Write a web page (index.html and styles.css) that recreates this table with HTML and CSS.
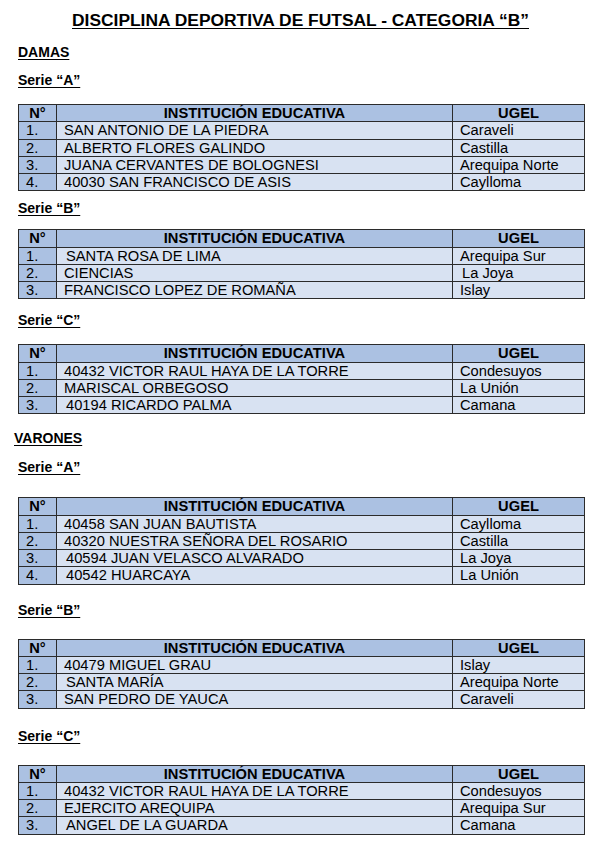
FILE: index.html
```html
<!DOCTYPE html>
<html lang="es">
<head>
<meta charset="utf-8">
<title>Disciplina deportiva de futsal</title>
<link rel="stylesheet" href="styles.css">
</head>
<body>
<div class="page">
  <h1 class="title">DISCIPLINA DEPORTIVA DE FUTSAL - CATEGORIA “B”</h1>

  <h2 class="cat g14">DAMAS</h2>
  <h3 class="serie g12">Serie “A”</h3>
  <table class="tbl g16">
    <tr><th class="n">N°</th><th>INSTITUCIÓN EDUCATIVA</th><th class="u">UGEL</th></tr>
    <tr><td class="n">1.</td><td>SAN ANTONIO DE LA PIEDRA</td><td>Caraveli</td></tr>
    <tr><td class="n">2.</td><td>ALBERTO FLORES GALINDO</td><td>Castilla</td></tr>
    <tr><td class="n">3.</td><td>JUANA CERVANTES DE BOLOGNESI</td><td>Arequipa Norte</td></tr>
    <tr><td class="n">4.</td><td>40030 SAN FRANCISCO DE ASIS</td><td>Caylloma</td></tr>
  </table>

  <h3 class="serie g9">Serie “B”</h3>
  <table class="tbl g13">
    <tr><th class="n">N°</th><th>INSTITUCIÓN EDUCATIVA</th><th class="u">UGEL</th></tr>
    <tr><td class="n">1.</td><td class="ind">SANTA ROSA DE LIMA</td><td>Arequipa Sur</td></tr>
    <tr><td class="n">2.</td><td>CIENCIAS</td><td class="ind">La Joya</td></tr>
    <tr><td class="n">3.</td><td>FRANCISCO LOPEZ DE ROMAÑA</td><td>Islay</td></tr>
  </table>

  <h3 class="serie g13">Serie “C”</h3>
  <table class="tbl g16">
    <tr><th class="n">N°</th><th>INSTITUCIÓN EDUCATIVA</th><th class="u">UGEL</th></tr>
    <tr><td class="n">1.</td><td>40432 VICTOR RAUL HAYA DE LA TORRE</td><td>Condesuyos</td></tr>
    <tr><td class="n">2.</td><td>MARISCAL ORBEGOSO</td><td>La Unión</td></tr>
    <tr><td class="n">3.</td><td class="ind">40194 RICARDO PALMA</td><td>Camana</td></tr>
  </table>

  <h2 class="cat varones g16">VARONES</h2>
  <h3 class="serie g13">Serie “A”</h3>
  <table class="tbl g22">
    <tr><th class="n">N°</th><th>INSTITUCIÓN EDUCATIVA</th><th class="u">UGEL</th></tr>
    <tr><td class="n">1.</td><td>40458 SAN JUAN BAUTISTA</td><td>Caylloma</td></tr>
    <tr><td class="n">2.</td><td>40320 NUESTRA SEÑORA DEL ROSARIO</td><td>Castilla</td></tr>
    <tr><td class="n">3.</td><td class="ind">40594 JUAN VELASCO ALVARADO</td><td>La Joya</td></tr>
    <tr><td class="n">4.</td><td class="ind">40542 HUARCAYA</td><td>La Unión</td></tr>
  </table>

  <h3 class="serie g17">Serie “B”</h3>
  <table class="tbl g21">
    <tr><th class="n">N°</th><th>INSTITUCIÓN EDUCATIVA</th><th class="u">UGEL</th></tr>
    <tr><td class="n">1.</td><td>40479 MIGUEL GRAU</td><td>Islay</td></tr>
    <tr><td class="n">2.</td><td class="ind">SANTA MARÍA</td><td>Arequipa Norte</td></tr>
    <tr><td class="n">3.</td><td>SAN PEDRO DE YAUCA</td><td>Caraveli</td></tr>
  </table>

  <h3 class="serie g19">Serie “C”</h3>
  <table class="tbl g21">
    <tr><th class="n">N°</th><th>INSTITUCIÓN EDUCATIVA</th><th class="u">UGEL</th></tr>
    <tr><td class="n">1.</td><td>40432 VICTOR RAUL HAYA DE LA TORRE</td><td>Condesuyos</td></tr>
    <tr><td class="n">2.</td><td>EJERCITO AREQUIPA</td><td>Arequipa Sur</td></tr>
    <tr><td class="n">3.</td><td class="ind">ANGEL DE LA GUARDA</td><td>Camana</td></tr>
  </table>
</div>
</body>
</html>
```
FILE: styles.css
```css
html, body {
  margin: 0;
  padding: 0;
  background: #ffffff;
}
body {
  font-family: "Liberation Sans", Arial, sans-serif;
  color: #000;
}
.page {
  padding: 10px 8px 0 18px;
  width: 567px;
}
.title {
  margin: 0;
  font-size: 17.4px;
  line-height: 20px;
  font-weight: bold;
  text-align: center;
  text-decoration: underline;
  text-underline-offset: 2px;
  padding-right: 2px;
}
.cat, .serie {
  margin: 0;
  font-size: 14px;
  line-height: 16px;
  font-weight: bold;
  text-decoration: underline;
  text-underline-offset: 2px;
}
.varones {
  margin-left: -4px;
}
.g9 { margin-top: 9px; }
.g12 { margin-top: 12px; }
.g13 { margin-top: 13px; }
.g14 { margin-top: 14px; }
.g16 { margin-top: 16px; }
.g17 { margin-top: 17px; }
.g19 { margin-top: 19px; }
.g21 { margin-top: 21px; }
.g22 { margin-top: 22px; }

.tbl {
  border-collapse: collapse;
  width: 567px;
  table-layout: fixed;
  font-size: 14.7px;
}
.tbl th, .tbl td {
  border: 1px solid #2b2b2b;
  height: 16.25px;
  line-height: 16px;
  padding: 0 0 0 7px;
  white-space: nowrap;
  overflow: hidden;
  background: #d8e2f2;
  text-align: left;
}
.tbl th {
  background: #abc1e2;
  font-weight: bold;
  text-align: center;
  padding: 0;
}
.tbl .n {
  width: 37px;
  background: #abc1e2;
}
.tbl th.u {
  width: 131px;
}
.tbl td.ind {
  padding-left: 9px;
}
```
